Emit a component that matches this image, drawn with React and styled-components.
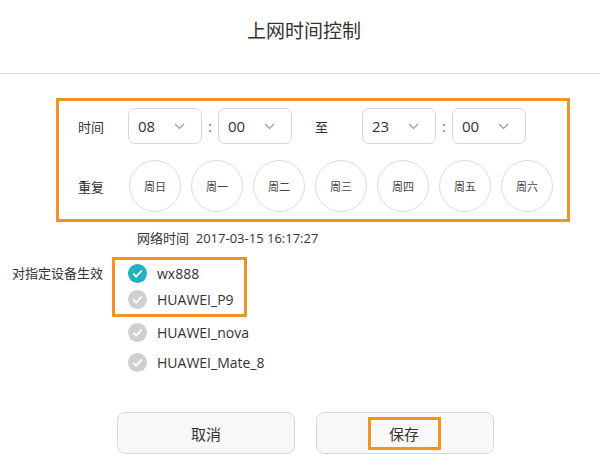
import React from 'react';
import styled, { createGlobalStyle } from 'styled-components';

const GlobalStyle = createGlobalStyle`
  body {
    margin: 0;
    background: #ffffff;
    font-family: "Open Sans", "Noto Sans CJK SC", sans-serif;
    color: #333333;
  }
`;

const days = ['周日', '周一', '周二', '周三', '周四', '周五', '周六'];
const devices = [
  { name: 'wx888', checked: true, marked: true },
  { name: 'HUAWEI_P9', checked: false, marked: true },
  { name: 'HUAWEI_nova', checked: false },
  { name: 'HUAWEI_Mate_8', checked: false },
];

function Chevron() {
  return (
    <svg width='11' height='7' viewBox='0 0 11 7'>
      <path d='M1 1l4.5 4.5L10 1' fill='none' stroke='#9a9a9a' strokeWidth='1.2' />
    </svg>
  );
}

function CheckIcon({ checked }) {
  return (
    <CheckCircle checked={checked}>
      <svg width='11' height='9' viewBox='0 0 11 9'>
        <path d='M1.2 4.6l3 3L9.8 1.5' fill='none' stroke='#fff' strokeWidth='1.8' />
      </svg>
    </CheckCircle>
  );
}

function TimeSelect({ value }) {
  return (
    <Select>
      <span>{value}</span>
      <Chevron />
    </Select>
  );
}

export default function App() {
  return (
    <Page>
      <GlobalStyle />
      <Header>上网时间控制</Header>
      <ScheduleBox>
        <Row>
          <Label>时间</Label>
          <TimeSelect value='08' />
          <Colon>:</Colon>
          <TimeSelect value='00' />
          <To>至</To>
          <TimeSelect value='23' />
          <Colon>:</Colon>
          <TimeSelect value='00' />
        </Row>
        <Row gap='10px'>
          <Label>重复</Label>
          {days.map((d) => (
            <DayCircle key={d}>{d}</DayCircle>
          ))}
        </Row>
      </ScheduleBox>
      <NetTime>
        网络时间&nbsp;&nbsp;2017-03-15 16:17:27
      </NetTime>
      <DeviceSection>
        <DeviceLabel>对指定设备生效</DeviceLabel>
        <DeviceList>
          <MarkedGroup>
            {devices
              .filter((d) => d.marked)
              .map((d) => (
                <DeviceRow key={d.name} tight>
                  <CheckIcon checked={d.checked} />
                  <span>{d.name}</span>
                </DeviceRow>
              ))}
          </MarkedGroup>
          {devices
            .filter((d) => !d.marked)
            .map((d) => (
              <DeviceRow key={d.name}>
                <CheckIcon checked={d.checked} />
                <span>{d.name}</span>
              </DeviceRow>
            ))}
        </DeviceList>
      </DeviceSection>
      <Buttons>
        <Button>取消</Button>
        <Button>
          <Highlight>保存</Highlight>
        </Button>
      </Buttons>
    </Page>
  );
}

const Page = styled.div`
  width: 600px;
  height: 467px;
  overflow: hidden;
`;

const Header = styled.div`
  height: 74px;
  border-bottom: 1px solid #e3e3e3;
  display: flex;
  align-items: center;
  justify-content: center;
  font-size: 19px;
  color: #333;
  padding-left: 8px;
  box-sizing: border-box;
  padding-bottom: 14px;
`;

const ScheduleBox = styled.div`
  margin: 24px 0 0 56px;
  width: 514px;
  height: 124px;
  box-sizing: border-box;
  border: 3px solid #f39325;
  padding: 7px 0 0 19px;
  display: flex;
  flex-direction: column;
  gap: 16px;
`;

const Row = styled.div`
  display: flex;
  align-items: center;
  gap: ${(p) => p.gap || '0'};
`;

const Label = styled.span`
  width: 50px;
  font-size: 13px;
  color: #333;
  flex-shrink: 0;
`;

const Select = styled.div`
  width: 74px;
  height: 36px;
  box-sizing: border-box;
  border: 1px solid #d6d6d6;
  border-radius: 7px;
  display: flex;
  align-items: center;
  justify-content: space-between;
  padding: 0 16px 0 9px;
  font-size: 15px;
  color: #333;
`;

const Colon = styled.span`
  width: 16px;
  text-align: center;
  font-size: 14px;
  color: #666;
`;

const To = styled.span`
  margin: 0 34px 0 23px;
  font-size: 13px;
  color: #333;
`;

const DayCircle = styled.div`
  width: 52px;
  height: 52px;
  box-sizing: border-box;
  border: 1px solid #dcdcdc;
  border-radius: 50%;
  display: flex;
  align-items: center;
  justify-content: center;
  font-size: 11px;
  color: #444;
  margin-left: -9px;
  & + & {
    margin-left: 0;
  }
`;

const NetTime = styled.div`
  margin: 6px 0 0 137px;
  height: 20px;
  line-height: 20px;
  font-size: 13px;
  color: #333;
`;

const DeviceSection = styled.div`
  display: flex;
  align-items: flex-start;
  margin-top: 9px;
`;

const DeviceLabel = styled.div`
  width: 100px;
  padding-left: 12px;
  margin-top: 6px;
  font-size: 13px;
  color: #333;
`;

const DeviceList = styled.div`
  display: flex;
  flex-direction: column;
`;

const MarkedGroup = styled.div`
  width: 135px;
  box-sizing: border-box;
  border: 3px solid #f39325;
  padding: 0 0 2px 13px;
`;

const DeviceRow = styled.div`
  display: flex;
  align-items: center;
  gap: 10px;
  height: ${(p) => (p.tight ? '26px' : '30px')};
  padding-left: ${(p) => (p.tight ? '0' : '16px')};
  font-size: 14px;
  color: #333;
`;

const CheckCircle = styled.span`
  width: 19px;
  height: 19px;
  border-radius: 50%;
  background: ${(p) => (p.checked ? '#22b2bf' : '#cfcfcf')};
  display: flex;
  align-items: center;
  justify-content: center;
  flex-shrink: 0;
`;

const Buttons = styled.div`
  display: flex;
  gap: 21px;
  margin: 35px 0 0 117px;
`;

const Button = styled.div`
  width: 178px;
  height: 42px;
  box-sizing: border-box;
  border: 1px solid #d9d9d9;
  border-radius: 8px;
  background: #f8f8f8;
  display: flex;
  align-items: center;
  justify-content: center;
  font-size: 15px;
  color: #333;
`;

const Highlight = styled.span`
  width: 73px;
  height: 33px;
  box-sizing: border-box;
  border: 3px solid #f39325;
  display: flex;
  align-items: center;
  justify-content: center;
  margin-left: -2px;
`;
